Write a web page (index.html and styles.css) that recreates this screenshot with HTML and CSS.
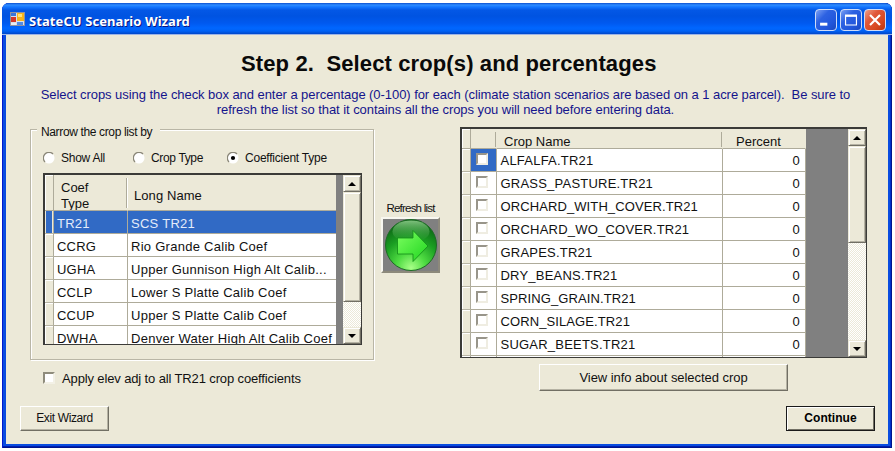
FILE: index.html
```
<!DOCTYPE html>
<html lang="en">
<head>
<meta charset="utf-8">
<title>StateCU Scenario Wizard</title>
<link rel="stylesheet" href="styles.css">
</head>
<body>
<div class="window">
  <header class="titlebar">
    <svg class="app-icon" width="16" height="16" viewBox="0 0 16 16">
      <rect x=".5" y="1.5" width="14" height="13" fill="#d9dfea" stroke="#8d93a3"/>
      <rect x="1" y="2" width="5" height="3" fill="#3a76d8"/>
      <rect x="1" y="6" width="5" height="5" fill="#d4382c"/>
      <rect x="1" y="12" width="5" height="2" fill="#e9ecf2"/>
      <rect x="7" y="2" width="7" height="8" fill="#f7b51b"/>
      <rect x="8" y="3" width="4" height="3" fill="#ffe37a"/>
      <rect x="7" y="11" width="6" height="3" fill="#4f8be6"/>
    </svg>
    <span class="title">StateCU Scenario Wizard</span>
    <div class="controls">
      <svg class="ctl" viewBox="0 0 22 22"><rect x="4.500" y="14" width="8" height="3.2" fill="#fff"/></svg>
      <svg class="ctl" viewBox="0 0 22 22"><path d="M5 6.5H17V16.5H5Z" fill="none" stroke="#fff" stroke-width="1.3"/><path d="M4.4 6.2H17.6" stroke="#fff" stroke-width="2.6"/></svg>
      <svg class="ctl close" viewBox="0 0 22 22"><path d="M5.500 5.500L16.500 16.500M16.500 5.500L5.500 16.500" stroke="#fff" stroke-width="2.4"/></svg>
    </div>
  </header>
  <main class="client">
    <h1 class="heading">Step 2.  Select crop(s) and percentages</h1>
    <p class="intro">Select crops using the check box and enter a percentage (0-100) for each (climate station scenarios are based on a 1 acre parcel).  Be sure to
refresh the list so that it contains all the crops you will need before entering data.</p>
    <div class="columns">
      <section class="left">
        <div class="group">
          <span class="legend">Narrow the crop list by</span>
          <div class="radios">
            <label class="option"><svg class="radio" viewBox="0 0 12 12"><circle cx="6" cy="6" r="5.5" fill="#fff"/><path d="M2 10A5.3 5.3 0 0 1 10 2" fill="none" stroke="#8a8778" stroke-width="1.3"/></svg><span class="t-show">Show All</span></label>
            <label class="option"><svg class="radio" viewBox="0 0 12 12"><circle cx="6" cy="6" r="5.5" fill="#fff"/><path d="M2 10A5.3 5.3 0 0 1 10 2" fill="none" stroke="#8a8778" stroke-width="1.3"/></svg><span class="t-crop">Crop Type</span></label>
            <label class="option"><svg class="radio" viewBox="0 0 12 12"><circle cx="6" cy="6" r="5.5" fill="#fff"/><path d="M2 10A5.3 5.3 0 0 1 10 2" fill="none" stroke="#8a8778" stroke-width="1.3"/><circle cx="6" cy="6" r="2.1"/></svg><span class="t-coef">Coefficient Type</span></label>
          </div>
          <div class="grid coef-grid">
            <div class="rows">
              <div class="row head"><i class="rh"></i><span class="c1">Coef<br>Type</span><span class="c2">Long Name</span></div>
              <div class="row selected"><i class="rh"></i><span class="c1">TR21</span><span class="c2">SCS TR21</span></div>
              <div class="row"><i class="rh"></i><span class="c1">CCRG</span><span class="c2">Rio Grande Calib Coef</span></div>
              <div class="row"><i class="rh"></i><span class="c1">UGHA</span><span class="c2">Upper Gunnison High Alt Calib...</span></div>
              <div class="row"><i class="rh"></i><span class="c1">CCLP</span><span class="c2">Lower S Platte Calib Coef</span></div>
              <div class="row"><i class="rh"></i><span class="c1">CCUP</span><span class="c2">Upper S Platte Calib Coef</span></div>
              <div class="row"><i class="rh"></i><span class="c1">DWHA</span><span class="c2">Denver Water High Alt Calib Coef</span></div>
            </div>
            <div class="scroll"><b class="sbtn"><svg width="8" height="4" viewBox="0 0 8 4"><path d="M0 4L4 0L8 4Z"/></svg></b><b class="thumb"></b><b class="sbtn down"><svg width="8" height="4" viewBox="0 0 8 4"><path d="M0 0L4 4L8 0Z"/></svg></b></div>
          </div>
        </div>
        <label class="apply"><i class="check"></i><span>Apply elev adj to all TR21 crop coefficients</span></label>
        <button class="btn exit">Exit Wizard</button>
      </section>
      <section class="middle">
        <span class="refresh-label">Refresh list</span>
        <button class="refresh" aria-label="Refresh list">
          <svg width="54" height="52" viewBox="0 0 54 52">
            <defs>
              <radialGradient id="ball" cx=".5" cy=".95" r=".95"><stop offset="0" stop-color="#a8ff88"/><stop offset=".3" stop-color="#4fdc42"/><stop offset=".62" stop-color="#1a9e22"/><stop offset="1" stop-color="#0b5c14"/></radialGradient>
              <linearGradient id="gloss" x1="0" y1="0" x2="0" y2="1"><stop offset="0" stop-color="#a5e0a0" stop-opacity=".75"/><stop offset="1" stop-color="#2f9a35" stop-opacity=".1"/></linearGradient>
              <linearGradient id="arrow" x1="0" y1="0" x2="1" y2="1"><stop offset="0" stop-color="#7dff60"/><stop offset="1" stop-color="#1fd51f"/></linearGradient>
            </defs>
            <circle cx="27" cy="26" r="25.5" fill="url(#ball)" stroke="#1d6b25"/>
            <ellipse cx="27" cy="12.5" rx="18.5" ry="11" fill="url(#gloss)"/>
            <path d="M13.500 19H29V11.500L44 27L29 42.500V35H13.500Z" fill="url(#arrow)" stroke="#128a18" stroke-width=".8"/>
          </svg>
        </button>
      </section>
      <section class="right">
        <div class="grid crop-grid">
          <div class="rows">
            <div class="row head"><i class="rh"></i><span class="k"></span><span class="n">Crop Name</span><span class="p">Percent</span></div>
            <div class="row current"><i class="rh"></i><span class="k"><i class="check"></i></span><span class="n">ALFALFA.TR21</span><span class="p">0</span></div>
            <div class="row"><i class="rh"></i><span class="k"><i class="check"></i></span><span class="n">GRASS_PASTURE.TR21</span><span class="p">0</span></div>
            <div class="row"><i class="rh"></i><span class="k"><i class="check"></i></span><span class="n tight">ORCHARD_WITH_COVER.TR21</span><span class="p">0</span></div>
            <div class="row"><i class="rh"></i><span class="k"><i class="check"></i></span><span class="n">ORCHARD_WO_COVER.TR21</span><span class="p">0</span></div>
            <div class="row"><i class="rh"></i><span class="k"><i class="check"></i></span><span class="n">GRAPES.TR21</span><span class="p">0</span></div>
            <div class="row"><i class="rh"></i><span class="k"><i class="check"></i></span><span class="n">DRY_BEANS.TR21</span><span class="p">0</span></div>
            <div class="row"><i class="rh"></i><span class="k"><i class="check"></i></span><span class="n tight">SPRING_GRAIN.TR21</span><span class="p">0</span></div>
            <div class="row"><i class="rh"></i><span class="k"><i class="check"></i></span><span class="n tight">CORN_SILAGE.TR21</span><span class="p">0</span></div>
            <div class="row"><i class="rh"></i><span class="k"><i class="check"></i></span><span class="n">SUGAR_BEETS.TR21</span><span class="p">0</span></div>
            <div class="row"><i class="rh"></i><span class="k"></span><span class="n"></span><span class="p"></span></div>
          </div>
          <div class="scroll"><b class="sbtn"><svg width="8" height="4" viewBox="0 0 8 4"><path d="M0 4L4 0L8 4Z"/></svg></b><b class="thumb"></b><b class="sbtn down"><svg width="8" height="4" viewBox="0 0 8 4"><path d="M0 0L4 4L8 0Z"/></svg></b></div>
        </div>
        <button class="btn view">View info about selected crop</button>
        <button class="btn continue">Continue</button>
      </section>
    </div>
  </main>
</div>
</body>
</html>
```
FILE: styles.css
```
* { box-sizing: border-box; }
body { margin: 0; background: #fff; overflow: hidden; font: 13px/15px "Liberation Sans", Arial, sans-serif; color: #111; }
.window {
  width: 890px; height: 445px; margin: 3px 0 0 2px; padding: 0 4px 4px;
  display: flex; flex-direction: column;
  border-radius: 7px 7px 0 0;
  background: #0a4ce0;
  box-shadow: inset 1px 0 #0019cf, inset -1px 0 #00138c, inset 0 -1px #00138c, inset -2px 0 #0030c8, inset 0 -2px #001db0;
}
.titlebar {
  height: 32px; margin: 0 -4px; padding: 1px 6px 0 8px; flex: none;
  display: flex; align-items: center;
  border-radius: 7px 7px 0 0; border-bottom: 1px solid #9db4e6;
  background: linear-gradient(#0b4fd0 0, #2f8dff 2px, #1476ff 4px, #0458e6 7px, #0053e1 13px, #0059ef 20px, #0066ff 25px, #0062f5 28px, #0046c8 31px);
}
.app-icon { margin-right: 3px; }
.title { font: bold 13px/18px "Noto Sans", sans-serif; letter-spacing: .08px; color: #fff; text-shadow: 1px 1px #0a1883; padding-top: 3px; }
.controls { display: flex; gap: 2.5px; margin-left: auto; padding-top: 2px; }
.ctl { width: 22px; height: 22px; border: 1px solid #cfdcf8; border-radius: 4px; background: linear-gradient(135deg, #7ba0f3, #2d62e2 35%, #2257dc 70%, #1a48c0); }
.ctl.close { background: linear-gradient(135deg, #f0a088, #e0583a 35%, #d8481f 70%, #b83410); }

.client { flex: 1; display: flex; flex-direction: column; background: #ece9d8; padding: 14px 0 0; min-height: 0; }
.heading { margin: 0; padding-left: 235px; font: bold 22px/29px "Liberation Sans", Arial, sans-serif; letter-spacing: .12px; white-space: pre; color: #0a0a0a; }
.intro { margin: 10px 0 0; padding-right: 3px; text-align: center; white-space: pre; color: #14148c; letter-spacing: -.06px; line-height: 14.7px; }
.columns { display: flex; margin-top: 7px; padding-left: 14px; }

.left { width: 361px; display: flex; flex-direction: column; align-items: flex-start; }
.group { width: 344px; height: 231px; margin: 5px 0 0 10px; padding: 0 0 0 12px; border: 1px solid #b9b6a6; box-shadow: 1px 1px #fff, inset 1px 1px #fff; }
.legend { display: block; width: 123px; margin: -9px 0 0 -6px; padding-left: 4px; height: 18px; line-height: 22px; background: #ece9d8; font-size: 12px; letter-spacing: -.36px; white-space: nowrap; }
.radios { display: flex; height: 18px; margin-top: 10px; align-items: center; font-size: 12px; }
.option { display: flex; align-items: center; gap: 6px; width: 90px; white-space: nowrap; }
.option:nth-child(2) { width: 94px; }
.radio { width: 12px; height: 12px; flex: none; }
.t-show { letter-spacing: -.25px; }
.t-crop { letter-spacing: -.35px; }
.t-coef { letter-spacing: -.23px; }

.grid { display: flex; border: 2px solid #3b3b38; border-right-width: 1px; border-bottom-width: 1px; background: #808080; overflow: hidden; }
.rows { overflow: hidden; }
.row { display: flex; height: 23px; }
.row > span { display: block; background: #fff; border-right: 1px solid #aeab9a; border-bottom: 1px solid #aeab9a; padding: 1px 0 0 3px; line-height: 22px; white-space: nowrap; overflow: hidden; letter-spacing: .22px; }
.rh { width: 9px; flex: none; background: #ece9d8; border-right: 1px solid #aeab9a; box-shadow: inset 1px 1px #fff; }
.row:not(.head) .rh { border-bottom: 1px solid #b9b6a6; }
.row.head > span { background: #ece9d8; border-right-color: transparent; letter-spacing: 0; }
.head .rh { border-bottom: 1px solid #aeab9a; }

.coef-grid { width: 319px; height: 172px; margin-top: 6px; }
.coef-grid .rows { width: 291px; }
.c1 { width: 74px; }
.coef-grid .row > span { padding-top: 2px; }
.coef-grid .c2 { width: 208px; letter-spacing: .27px; border-right: 0; }
.coef-grid .head { height: 36px; }
.coef-grid .head > .c1 { padding: 5px 0 0 7px; line-height: 15.5px; background: linear-gradient(#aeab9a, #aeab9a) 72px 3px / 1px 30px no-repeat, linear-gradient(#fff, #fff) 73px 3px / 1px 30px no-repeat #ece9d8; }
.coef-grid .head > .c2 { padding: 0 0 0 6px; line-height: 41px; letter-spacing: .08px; }
.selected > span { background: #316ac5; color: #e4ecfa; }
.selected .rh { background: #316ac5; box-shadow: inset 1px 0 #ece9d8, inset -1px 0 #ece9d8; }
.scroll { width: 18px; margin-left: auto; display: flex; flex-direction: column; background: repeating-conic-gradient(#fff 0 25%, #ece9d8 0 50%) 0 0 / 2px 2px; }
.sbtn, .thumb { display: flex; align-items: center; justify-content: center; background: #ece9d8; border: 1px solid; border-color: #ece9d8 #716f64 #716f64 #ece9d8; box-shadow: inset 1px 1px #fff, inset -1px -1px #b5b2a3; flex: none; }
.sbtn { height: 17px; }
.down { margin-top: auto; }
.coef-grid .thumb { height: 110px; }

.apply { display: flex; align-items: center; gap: 7px; margin: 10px 0 0 23px; letter-spacing: -.13px; white-space: nowrap; height: 16px; }
.check { display: block; width: 12px; height: 12px; background: #fff; border: 2px solid; border-color: #8f8c7c #f3f1e6 #f3f1e6 #8f8c7c; flex: none; }
.btn { margin: 0; padding: 0; background: #ece9d8; color: #111; border: 1px solid; border-color: #fff #716f64 #716f64 #fff; box-shadow: inset -1px -1px #b5b2a3; font: 13px/15px "Liberation Sans", Arial, sans-serif; white-space: nowrap; }
.exit { width: 89px; height: 25px; margin-top: 20px; font-size: 12px; letter-spacing: -.38px; }

.middle { width: 59px; display: flex; flex-direction: column; align-items: center; padding-top: 76px; }
.refresh-label { font-size: 11.5px; letter-spacing: -.78px; line-height: 17px; height: 17px; white-space: nowrap; }
.refresh { width: 59px; height: 56px; padding: 0; display: flex; align-items: center; justify-content: center; background: #808080; border: 2px solid; border-color: #f8f7f0 #8c897b #8c897b #f8f7f0; }

.right { padding-left: 20px; display: flex; flex-direction: column; width: 448px; }
.crop-grid { width: 407px; height: 231px; margin-top: 3px; }
.crop-grid .rows { width: 344px; }
.crop-grid .head { height: 20px; }
.k { width: 26px; flex: none; }
.n { width: 226px; flex: none; }
.n.tight { letter-spacing: .1px !important; }
.p { width: 83px; flex: none; text-align: right; }
.row > .p { padding-right: 5px; }
.row > .k { padding: 4px 0 0 5px; }
.row > .n { padding-left: 3.5px; }
.crop-grid .head .k, .crop-grid .head .n { background: linear-gradient(#aeab9a, #aeab9a) right 3px / 1px 15px no-repeat #ece9d8; }
.crop-grid .head .n { padding: 3px 0 0 7px; line-height: 19px; }
.crop-grid .head .p { padding: 3px 0 0 13px; line-height: 19px; text-align: left; }
.row:not(.head) .k .check { border-color: #98958a #efede2 #efede2 #98958a; }
.current > .k { background: #316ac5; }
.crop-grid .thumb { height: 97px; }
.view { width: 249px; height: 27px; margin: 6px 0 0 79px; letter-spacing: -.05px; }
.continue { width: 89px; height: 25px; margin: 15px 0 0 326px; font-weight: bold; font-size: 12px; letter-spacing: .05px; color: #000; border-color: #1a1a1a; box-shadow: inset 1px 1px #fff, inset -1px -1px #716f64; }
```
